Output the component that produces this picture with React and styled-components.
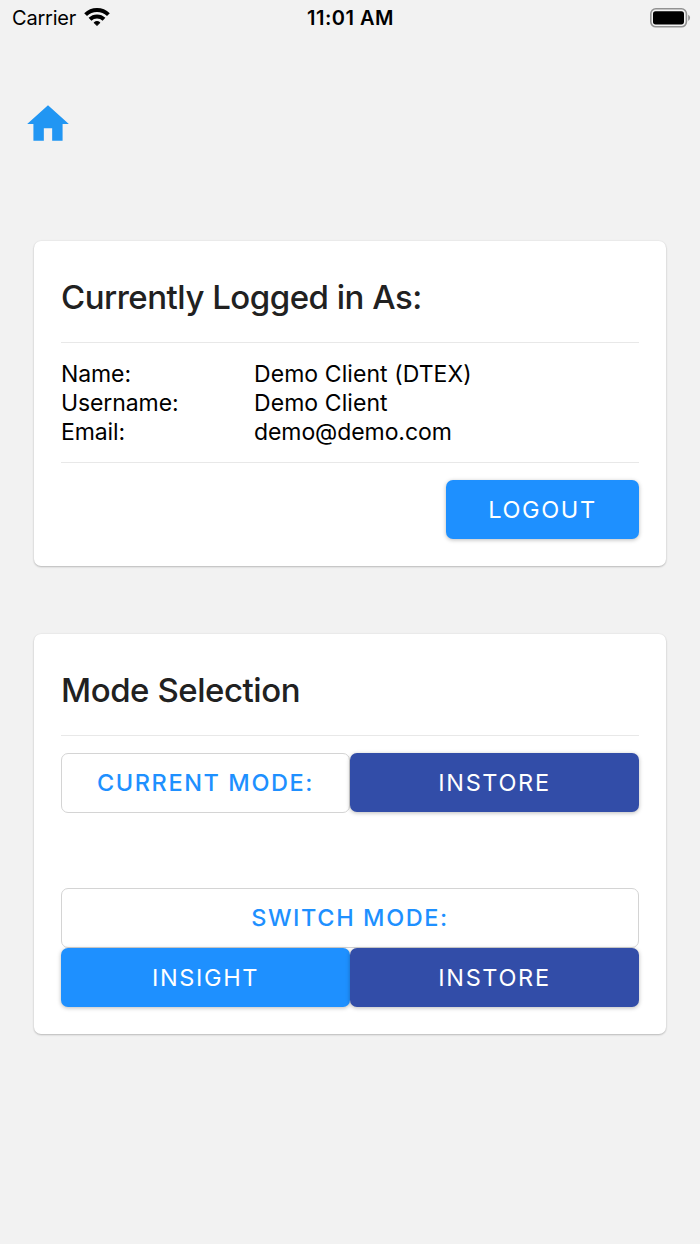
import React from "react";
import styled, { createGlobalStyle } from "styled-components";

const GlobalStyle = createGlobalStyle`
  * { box-sizing: border-box; }
  body {
    margin: 0;
    background: #f2f2f2;
    font-family: Inter, "Liberation Sans", sans-serif;
    color: #000;
  }
`;

const Screen = styled.div`
  display: flex;
  flex-direction: column;
  width: 700px;
  height: 1244px;
  overflow: hidden;
  background: #f2f2f2;
`;

const StatusBar = styled.header`
  display: grid;
  grid-template-columns: 1fr auto 1fr;
  align-items: center;
  height: 36px;
  padding: 0 9px 0 12px;
`;

const Carrier = styled.div`
  display: flex;
  align-items: center;
  gap: 8px;
  font-size: 20px;
  line-height: 36px;
  letter-spacing: -0.2px;
`;

const Clock = styled.div`
  margin-right: 2px;
  font-size: 20px;
  font-weight: 600;
  line-height: 36px;
  letter-spacing: 0.5px;
`;

const BatteryIcon = styled.svg`
  display: block;
  justify-self: end;
  margin-top: -1px;
`;

const WifiIcon = styled.svg`
  display: block;
  margin-top: -3px;
`;

const NavBar = styled.nav`
  height: 205px;
  padding: 63px 23px 0;
`;

const HomeIcon = styled.svg`
  display: block;
  fill: #2196f3;
`;

const Card = styled.section`
  display: flex;
  flex-direction: column;
  margin: 0 34px ${(p) => p.$gap || 0}px;
  padding: 27px 27px;
  border-radius: 7px;
  background: #fff;
  box-shadow: 0 1px 2px rgba(0, 0, 0, 0.22), 0 0 2px rgba(0, 0, 0, 0.08);
`;

const Title = styled.h1`
  margin: 0;
  font-size: 33px;
  font-weight: 500;
  line-height: 58px;
  color: #212121;
  letter-spacing: ${(p) => p.$tracking}px;
  white-space: nowrap;
`;

const Divider = styled.hr`
  width: 100%;
  height: 1px;
  margin: ${(p) => p.$above || 16}px 0 17px;
  border: 0;
  background: #e8e8e8;
`;

const Details = styled.dl`
  display: grid;
  grid-template-columns: 193px 1fr;
  margin: 0;
  font-size: 23px;
  line-height: 29px;
`;

const Term = styled.dt`
  margin: 0;
  letter-spacing: -0.1px;
`;

const Value = styled.dd`
  margin: 0;
  letter-spacing: ${(p) => (p.$tight ? "-0.08px" : "0.07px")};
`;

const Actions = styled.div`
  display: flex;
  justify-content: flex-end;
`;

const ButtonRow = styled.div`
  display: flex;
  align-items: flex-start;
  height: ${(p) => p.$height}px;
`;

const Button = styled.button`
  flex: ${(p) => (p.$width ? "none" : "1 1 50%")};
  width: ${(p) => (p.$width ? `${p.$width}px` : "auto")};
  height: 59px;
  padding: 0;
  border: 0;
  border-radius: 7px;
  background: ${(p) => (p.$tone === "navy" ? "#324da8" : "#1e90ff")};
  box-shadow: 0 1px 4px rgba(0, 0, 0, 0.27);
  color: #fff;
  font: 400 23.5px/59px Inter, "Liberation Sans", sans-serif;
  letter-spacing: 1.65px;
  text-align: center;
`;

const LabelButton = styled(Button)`
  height: 60px;
  border: 1px solid #d4d4d4;
  background: #fff;
  box-shadow: none;
  color: #1e90ff;
  font-weight: 500;
  line-height: 58px;
  letter-spacing: 1.6px;
`;

const Spacer = styled.div`
  height: 75px;
`;

export default function App() {
  return (
    <>
      <GlobalStyle />
      <Screen>
        <StatusBar>
          <Carrier>
            Carrier
            <WifiIcon width="26" height="20" viewBox="0 0 26 20">
              <g fill="none" stroke="#000" strokeWidth="4">
                <path d="M1.6 7.6a16.3 16.3 0 0 1 22.8 0" />
                <path d="M6 12.3a10.1 10.1 0 0 1 14 0" />
              </g>
              <path
                d="M13 18.6l-3.1-3a4.9 4.9 0 0 1 6.2 0z"
                stroke="#000"
                strokeWidth="0.8"
                strokeLinejoin="round"
              />
            </WifiIcon>
          </Carrier>
          <Clock>11:01 AM</Clock>
          <BatteryIcon width="41" height="20" viewBox="0 0 41 20">
            <rect x="0.8" y="0.8" width="35.6" height="18" rx="5" fill="none" stroke="#929292" strokeWidth="1.6" />
            <rect x="3" y="3.2" width="31" height="13.2" rx="2.6" />
            <path d="M38.2 6.7a3.5 3.5 0 0 1 0 6.2z" fill="#929292" />
          </BatteryIcon>
        </StatusBar>
        <NavBar>
          <HomeIcon width="50" height="50" viewBox="0 0 24 24">
            <path d="M10 20v-6h4v6h5v-8h3L12 3 2 12h3v8z" />
          </HomeIcon>
        </NavBar>
        <Card $gap={68}>
          <Title $tracking={-0.5}>Currently Logged in As:</Title>
          <Divider />
          <Details>
            <Term>Name:</Term>
            <Value>Demo Client (DTEX)</Value>
            <Term>Username:</Term>
            <Value>Demo Client</Value>
            <Term>Email:</Term>
            <Value $tight>demo@demo.com</Value>
          </Details>
          <Divider $above={15} />
          <Actions>
            <Button $width={193}>LOGOUT</Button>
          </Actions>
        </Card>
        <Card>
          <Title $tracking={-0.45}>Mode Selection</Title>
          <Divider />
          <ButtonRow $height={60}>
            <LabelButton as="div">CURRENT MODE:</LabelButton>
            <Button $tone="navy">INSTORE</Button>
          </ButtonRow>
          <Spacer />
          <ButtonRow $height={60}>
            <LabelButton as="div">SWITCH MODE:</LabelButton>
          </ButtonRow>
          <ButtonRow $height={59}>
            <Button>INSIGHT</Button>
            <Button $tone="navy">INSTORE</Button>
          </ButtonRow>
        </Card>
      </Screen>
    </>
  );
}
